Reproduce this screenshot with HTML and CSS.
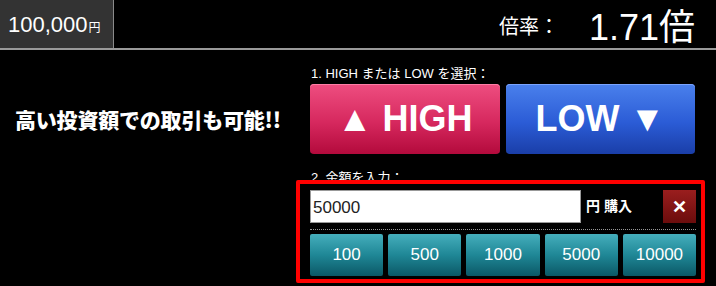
FILE: index.html
```html
<!DOCTYPE html>
<html>
  <head>
    <meta charset="utf-8">
    <title>取引パネル</title>
    <link rel="stylesheet" href="styles.css">
  </head>
  <body>
    <div class="header">
      <div class="balance">100,000<span class="yen">円</span></div>
      <div class="rate">
        <span class="rate-label">倍率：</span>
        <span class="rate-value">1.71倍</span>
      </div>
    </div>
    <div class="main">
      <div class="promo">高い投資額での取引も可能!!</div>
      <div class="panel">
        <div class="step">1. HIGH または LOW を選択：</div>
        <div class="direction">
          <button type="button" class="dir high">▲ HIGH</button>
          <button type="button" class="dir low">LOW ▼</button>
        </div>
        <div class="step step2">2. 金額を入力：</div>
        <div class="amountbox">
          <div class="amountrow">
            <input class="amount" type="text" value="50000">
            <span class="unit">円 購入</span>
            <button type="button" class="clear">✕</button>
          </div>
          <div class="presets">
            <button type="button" class="preset">100</button>
            <button type="button" class="preset">500</button>
            <button type="button" class="preset">1000</button>
            <button type="button" class="preset">5000</button>
            <button type="button" class="preset">10000</button>
          </div>
        </div>
      </div>
    </div>
  </body>
</html>
```

FILE: styles.css
```css
* {
  box-sizing: border-box;
}
body {
  margin: 0;
  background: #000;
  color: #fff;
  font-family: "Liberation Sans", "Noto Sans CJK JP", sans-serif;
}
button {
  font-family: inherit;
  cursor: pointer;
}
.header {
  display: flex;
  align-items: stretch;
  justify-content: space-between;
  height: 50px;
  border-bottom: 2px solid #9a9a9a;
}
.balance {
  width: 114px;
  background: #333;
  border-right: 1px solid #8a8a8a;
  padding: 12px 0 0 8px;
  font-size: 22px;
}
.balance .yen {
  font-size: 12px;
  margin-left: 1px;
}
.rate {
  display: flex;
  align-items: center;
  padding-right: 21px;
}
.rate-label {
  font-size: 20px;
  margin-right: 30px;
  padding-top: 3px;
}
.rate-value {
  font-size: 36px;
}
.main {
  display: flex;
}
.promo {
  width: 296px;
  padding: 54px 0 0 15px;
  font-family: "Noto Sans CJK JP", sans-serif;
  font-weight: 900;
  font-size: 21px;
  letter-spacing: -0.2px;
}
.panel {
  width: 410px;
  padding-top: 13px;
}
.step {
  padding-left: 15px;
  font-size: 13px;
  height: 20px;
}
.direction {
  display: flex;
  gap: 6px;
  margin: 1px 0 0 14px;
  width: 385px;
}
.dir {
  flex: 1;
  height: 70px;
  border: 0;
  border-radius: 4px;
  color: #fff;
  font-weight: bold;
  font-size: 36px;
}
.high {
  background: linear-gradient(#ee4e80, #d6285e 55%, #b30a3c);
  box-shadow: inset 0 1px 0 #ff7ea6;
}
.low {
  background: linear-gradient(#4a80ec, #2b5cd6 55%, #1a3ea8);
  box-shadow: inset 0 1px 0 #7aa4ff;
}
.step2 {
  margin-top: 13px;
}
.amountbox {
  position: relative;
  margin-top: -7px;
  width: 409px;
  background: #000;
  border: 4px solid #f00;
  border-radius: 2px;
  padding: 6px 5px 3px 10px;
}
.amountrow {
  display: flex;
  align-items: flex-start;
  height: 40px;
  border-bottom: 1px dotted #999;
}
.amount {
  width: 271px;
  height: 33px;
  border: 1px solid #999;
  padding: 2px 2px 0;
  font-family: "Liberation Sans", sans-serif;
  font-size: 17px;
  color: #222;
}
.unit {
  margin: 5px 0 0 5px;
  font-size: 14px;
  font-weight: bold;
  flex: 1;
}
.clear {
  width: 33px;
  height: 33px;
  border: 0;
  background: linear-gradient(#9a1e1e, #6b0c0c);
  color: #fff;
  font-size: 18px;
  font-weight: bold;
}
.presets {
  display: flex;
  gap: 5px;
  margin-top: 4px;
}
.preset {
  flex: 1;
  height: 42px;
  border: 0;
  border-radius: 2px;
  background: linear-gradient(#45aebc, #1f8796 50%, #0b5866);
  color: #fff;
  font-size: 17px;
}
```
